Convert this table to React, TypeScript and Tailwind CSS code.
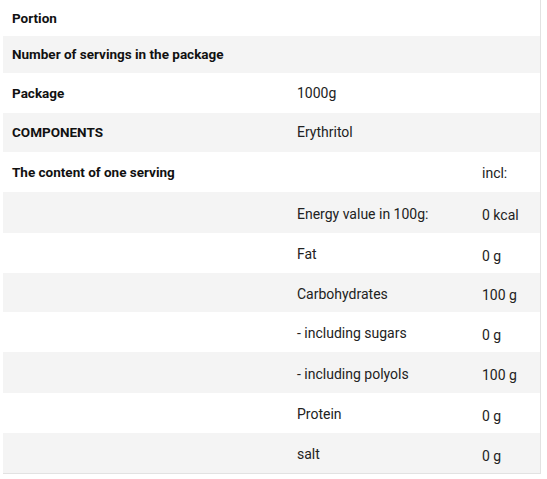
const rows: { label?: string; name?: string; value?: string; h: string; bold?: boolean }[] = [
  { label: 'Portion', h: 'h-[36px]' },
  { label: 'Number of servings in the package', h: 'h-[37px]' },
  { label: 'Package', name: '1000g', h: 'h-[40px]' },
  { label: 'COMPONENTS', name: 'Erythritol', h: 'h-[39px]' },
  { label: 'The content of one serving', value: 'incl:', h: 'h-[40px]' },
  { name: 'Energy value in 100g:', value: '0 kcal', h: 'h-[41px]' },
  { name: 'Fat', value: '0 g', h: 'h-[40px]' },
  { name: 'Carbohydrates', value: '100 g', h: 'h-[39px]' },
  { name: '- including sugars', value: '0 g', h: 'h-[40px]' },
  { name: '- including polyols', value: '100 g', h: 'h-[41px]' },
  { name: 'Protein', value: '0 g', h: 'h-[40px]' },
  { name: 'salt', value: '0 g', h: 'h-[40px]' },
];

export default function App() {
  return (
    <div className="w-[547px] h-[479px] bg-white font-['Roboto',sans-serif] text-[14px]">
      <div className="ml-[3px] w-[538px] border-r border-b border-[#e2e2e2]">
        {rows.map((row, i) => (
          <div
            key={i}
            className={`grid grid-cols-[285px_185px_1fr] items-center ${row.h} ${
              i % 2 === 1 ? 'bg-[#f4f4f4]' : 'bg-white'
            }`}
          >
            <div className="pl-[9px] text-[13.5px] font-bold text-[#111]">{row.label}</div>
            <div className={`pl-[9px] text-[#222] ${row.label ? '' : 'pt-[3px]'}`}>{row.name}</div>
            <div className={`pl-[9px] text-[#222] ${row.label ? 'pt-[3px]' : 'pt-[6px]'}`}>{row.value}</div>
          </div>
        ))}
      </div>
    </div>
  );
}
